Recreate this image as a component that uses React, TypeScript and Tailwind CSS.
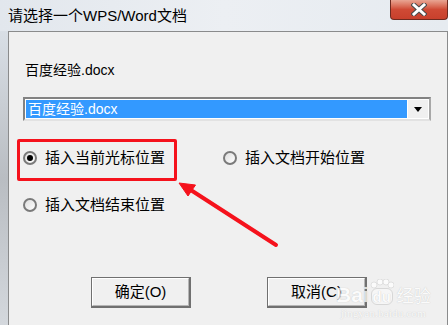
import React from 'react'

const font = { fontFamily: '"Liberation Sans", "Noto Sans CJK SC", sans-serif' }

function Radio({ checked }: { checked?: boolean }) {
  return (
    <span className="flex h-[14px] w-[14px] shrink-0 items-center justify-center rounded-full border-2 border-[#7a7a7a] bg-gradient-to-br from-[#dedede] to-white">
      {checked && <span className="h-[6px] w-[6px] rounded-full bg-black" />}
    </span>
  )
}

function Option({ label, checked }: { label: string; checked?: boolean }) {
  return (
    <label className="flex items-center gap-[8px] text-[15px] leading-[20px] text-black">
      <Radio checked={checked} />
      <span>{label}</span>
    </label>
  )
}

function WinButton({ label }: { label: string }) {
  return (
    <button className="h-[31px] w-[100px] border border-[#707070] border-b-2 border-r-2 bg-[#f0f0f0]">
      <span className="flex h-full w-full items-center justify-center border border-t-white border-l-white border-r-[#b5b5b5] border-b-[#b5b5b5] text-[15px] text-black">
        {label}
      </span>
    </button>
  )
}

export default function App() {
  return (
    <div className="relative h-[325px] w-[448px] overflow-hidden bg-[#dfe4ea]" style={font}>
      {/* title bar */}
      <div className="flex h-[31px] bg-gradient-to-r from-[#e2e7ed] via-[#eceff3] to-[#e6ebf0]">
        <div className="pl-[8px] pt-[6px] text-[15px] leading-[20px] text-black">
          请选择一个WPS/Word文档
        </div>
        <div className="ml-auto flex h-[20px] w-[58px] items-center justify-center rounded-b-[4px] border border-t-0 border-[#6e2a1f] bg-gradient-to-b from-[#e8a593] via-[#cf4a35] to-[#c8402c]">
          <svg width="16" height="13" viewBox="0 0 16 13">
            <path d="M3 2 L13 11 M13 2 L3 11" stroke="#4a4a4a" strokeWidth="5" strokeLinecap="square" />
            <path d="M3 2 L13 11 M13 2 L3 11" stroke="#ffffff" strokeWidth="3" strokeLinecap="square" />
          </svg>
        </div>
      </div>

      <div className="flex h-[294px]">
        <div className="w-[8px] bg-gradient-to-b from-[#d9dfe6] via-[#b9bdc2] to-[#d4d8dd]" />
        {/* client area */}
        <div className="flex flex-1 flex-col border-l border-t border-r border-[#8a8b8c] bg-[#f0f0f0]">
          <div className="ml-[16px] mt-[28px] text-[14px] leading-[20px] text-black">百度经验.docx</div>

          <div className="ml-[14px] mt-[17px] flex h-[24px] w-[408px] border-2 border-t-[#828282] border-l-[#828282] border-r-[#a8a8a8] border-b-[#e2e2e2] bg-white p-px">
            <div className="flex-1 bg-[#3399ff] pl-[2px] text-[14px] leading-[19px] text-white">百度经验.docx</div>
            <div className="flex w-[21px] items-center justify-center border-l border-white bg-[#f0f0f0]">
              <svg width="8" height="5" viewBox="0 0 8 5">
                <polygon points="0,0 8,0 4,5" fill="#000" />
              </svg>
            </div>
          </div>

          <div className="mt-[18px] flex">
            <div className="ml-[8px] flex h-[42px] w-[160px] items-center rounded-[2px] border-[3px] border-[#f5121c] pb-[4px] pl-[3px]">
              <Option label="插入当前光标位置" checked />
            </div>
            <div className="ml-[46px] flex h-[42px] items-center pb-[4px]">
              <Option label="插入文档开始位置" />
            </div>
          </div>

          <div className="ml-[14px] mt-[14px] flex h-[20px] items-center">
            <Option label="插入文档结束位置" />
          </div>

          <div className="ml-[82px] mt-[62px] flex gap-[76px]">
            <WinButton label="确定(O)" />
            <WinButton label="取消(C)" />
          </div>
        </div>
      </div>

      {/* annotation arrow */}
      <svg className="absolute left-[170px] top-[175px]" width="115" height="80" viewBox="0 0 115 80">
        <line x1="106" y1="70" x2="20" y2="14.5" stroke="#f5121c" strokeWidth="4" strokeLinecap="round" />
        <polygon points="9,8 25.5,10 18,21" fill="#f5121c" stroke="#f5121c" strokeWidth="1" strokeLinejoin="round" />
      </svg>

      {/* watermark */}
      <div className="pointer-events-none absolute left-[336px] top-[279px] flex flex-col items-center text-white opacity-75 [text-shadow:0_0_1px_#b0b0b0]">
        <div className="flex items-end leading-none">
          <span className="text-[21px] font-bold" style={{ fontFamily: '"Liberation Sans", sans-serif' }}>Bai</span>
          <span className="relative ml-[1px] flex flex-col items-center">
            <svg width="24" height="10" viewBox="0 0 24 10" className="mb-[-1px]">
              <circle cx="4" cy="6" r="3" fill="#fff" stroke="#c8c8c8" strokeWidth="0.6" />
              <circle cx="10" cy="3" r="3" fill="#fff" stroke="#c8c8c8" strokeWidth="0.6" />
              <circle cx="16" cy="3" r="3" fill="#fff" stroke="#c8c8c8" strokeWidth="0.6" />
              <circle cx="21" cy="6" r="3" fill="#fff" stroke="#c8c8c8" strokeWidth="0.6" />
            </svg>
            <span className="rounded-[6px] border border-[#cfcfcf] bg-white/60 px-[1px] text-[15px] font-bold text-white">du</span>
          </span>
          <span className="ml-[3px] text-[17px]">经验</span>
        </div>
        <div className="mt-[3px] text-[11px] leading-none tracking-[0.2px]" style={{ fontFamily: '"Liberation Serif", serif' }}>
          jingyan.baidu.com
        </div>
      </div>
    </div>
  )
}
